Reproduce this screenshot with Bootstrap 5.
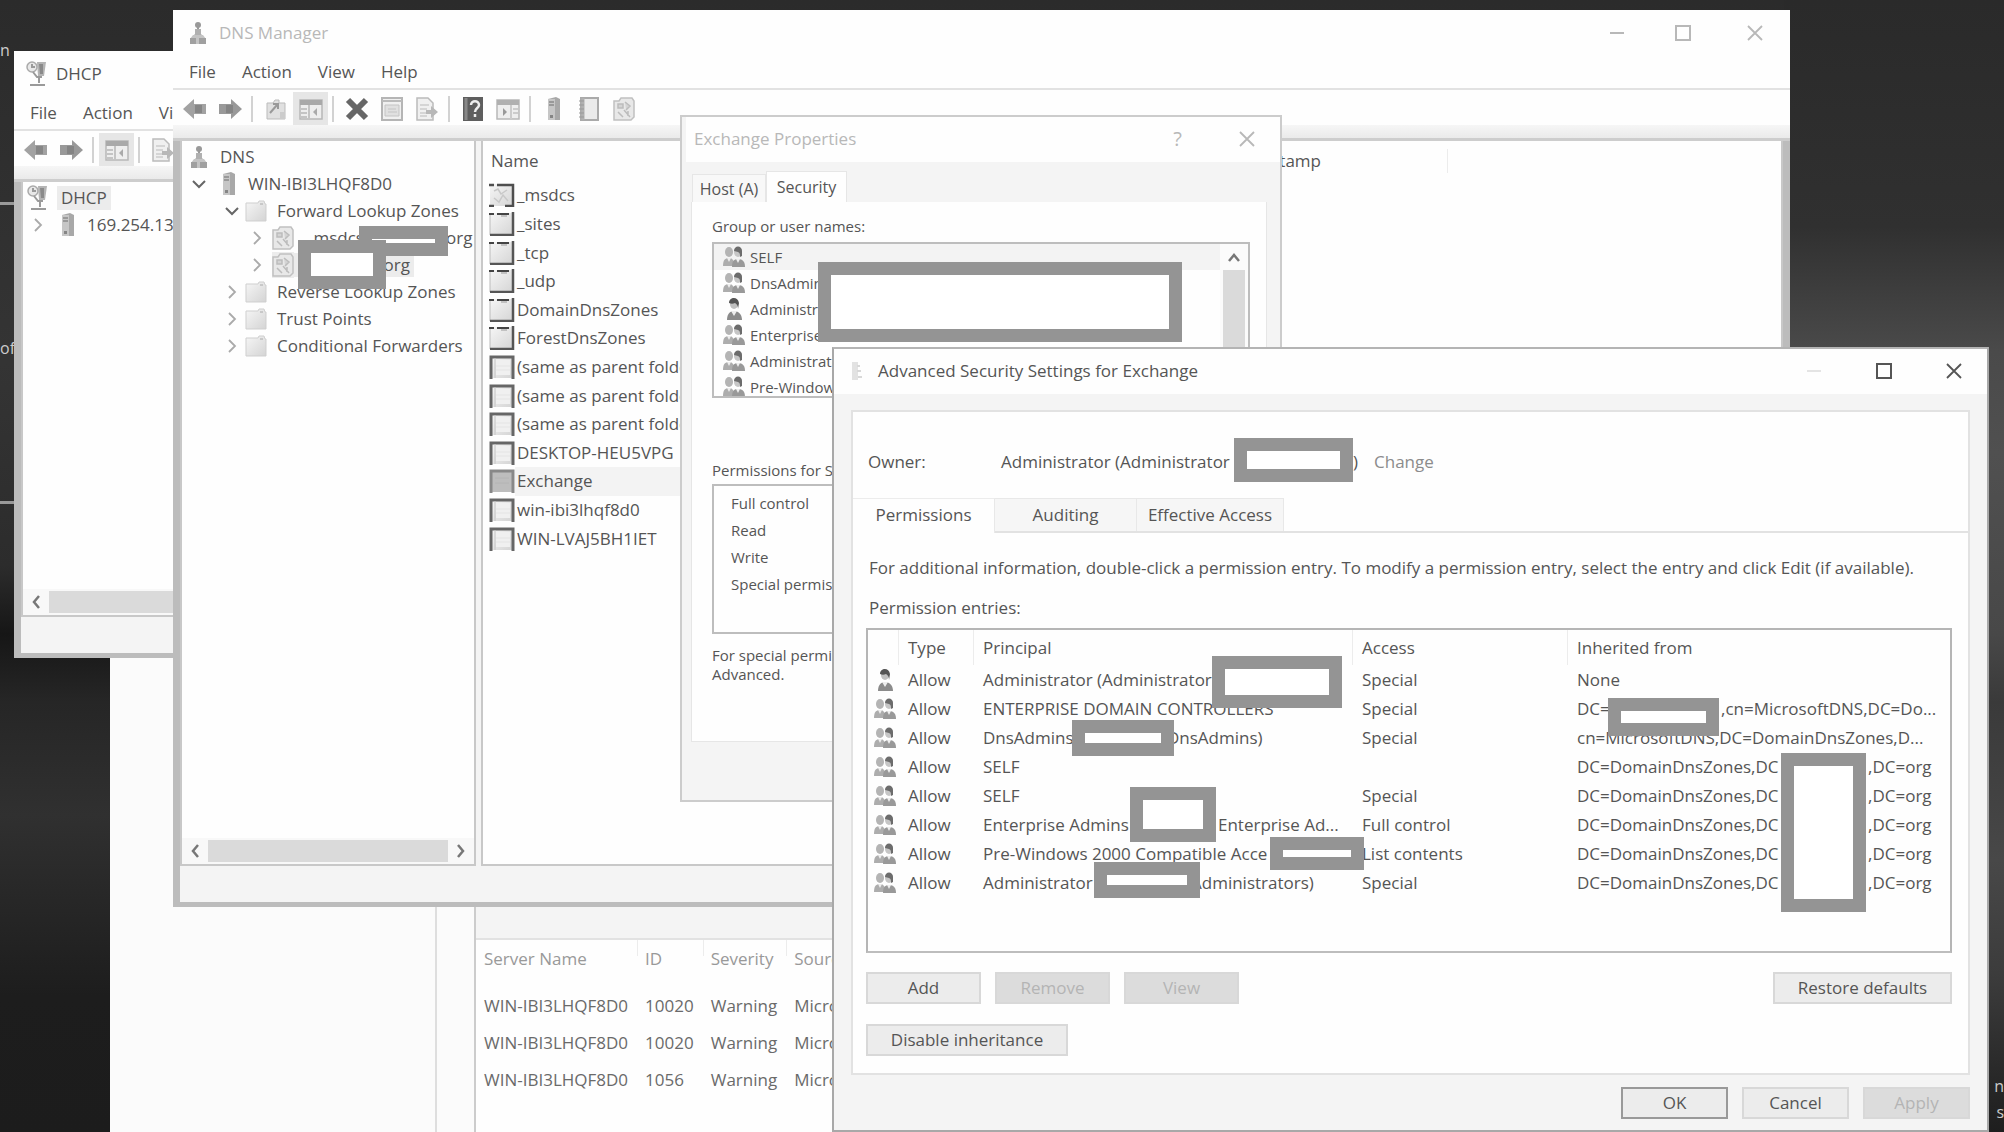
<!DOCTYPE html>
<html lang="en">
<head>
<meta charset="utf-8">
<meta name="viewport" content="width=device-width, initial-scale=1">
<title>DNS Manager</title>
<link rel="stylesheet" href="https://cdn.jsdelivr.net/npm/bootstrap@5.3.0/dist/css/bootstrap.min.css">
<style>
:root{--ink:#555;--face:#f4f4f4;--edge:#bcbcbc}
body{font-family:"Open Sans","Noto Sans",sans-serif;font-size:17px;line-height:24px;color:var(--ink);background:#2c2c2c}
.desktop{height:100vh;overflow:hidden;background:
 linear-gradient(180deg,#2a2a2a 0,#303030 20%,#4a4a4a 31%,#505050 40%,#484848 56%,#3a3a3a 62%,#484848 76%,#3c3c3c 86%,#1e1e1e 100%) right/220px 100% no-repeat,
 linear-gradient(180deg,#2b2b2b 0,#343434 32%,#2c2c2c 50%,#161616 56%,#262626 62%,#303030 72%,#1d1d1d 88%,#1c1c1c 100%)}
.desk-note{left:0;color:#ccc;font-size:16px}
.desk-line{left:0;width:14px;height:3px;background:#999}
.win{background:#fefefe;overflow:hidden;white-space:nowrap}
.win ul,.win p{margin:0;padding:0;list-style:none}
.win svg{display:block;flex:none}
.w-server{left:110px;top:640px;right:740px;bottom:0;background:#fbfbfb}
.w-dhcp{left:14px;top:51px;width:24%;height:607px}
.w-dns{left:173px;top:10px;right:214px;height:897px}
.w-props{left:680px;top:115px;right:722px;background:var(--face);border:2px solid #ccc}
.w-adv{left:832px;top:347px;right:15px;background:var(--face);border:2px solid #a8a8a8;border-top-color:#b4b4b4}
.titlebar{height:45px;background:#fefefe}
.w-props .titlebar,.w-adv .titlebar{padding-bottom:2px}
.dim{color:#b8b8b8}
.menubar{height:35px;border-bottom:2px solid #e2e2e2;gap:26px}
.menubar button,.toolbar button{border:0;background:none;color:inherit;padding:0}
.toolbar{height:35px;background:#fefefe;padding-top:2px}
.toolbar button{width:35px;height:33px;display:flex;align-items:center;justify-content:center}
.toolbar button.on{background:#e6e6e6}
.sep{width:2px;height:26px;margin:0 5px 0 4px;background:#d2d2d2}
.band{height:16px;background:linear-gradient(#f6f6f6,#eaeaea);border-bottom:3px solid #cdcdcd}
.client{border:solid var(--edge);border-width:0 7px 5px 7px;background:var(--face)}
.pane{background:#fefefe;border:2px solid #c8c8c8;border-top:0}
.statusbar{height:36px}
.win .tree{padding-top:2px}
.tree li{height:27px;display:flex;align-items:center}
.tree .tw{width:14px;display:flex;justify-content:center}
.tree .lv1{padding-left:10px}
.tree .lv2{padding-left:43px}
.tree .lv2>svg{margin:0 6px}
.tree .lv3{padding-left:68px}
.hl{background:#ececec}
.hscroll{height:26px;background:#f8f8f8}
.hscroll .thumb{height:22px;background:#dadada}
.list-head{height:40px}
.stamp{width:120px;margin-right:333px;padding-right:126px;border-right:1px solid #ececec;box-sizing:content-box}
.win .reclist{height:372px;display:grid;grid-auto-rows:1fr;padding-left:6px}
.reclist li{display:flex;align-items:center;gap:2px}
.reclist .sel{width:220px;background:linear-gradient(90deg,transparent 26px,#f3f3f3 26px)}
.props-tabs{height:40px;padding:0 10px}
.props-tabs button{border:1px solid #e6e6e6;border-bottom:0;background:#f8f8f8;color:inherit;font-size:16px;padding:0}
.props-tabs .t1{width:74px;height:28px}
.props-tabs .t2{width:81px;height:31px;background:#fefefe}
.props-body{margin:0 13px 58px 9px;background:#fefefe;border:1px solid #e6e6e6;border-top:0;padding:12px 16px 0 20px;height:540px;font-size:15px}
.boxed{border:2px solid #bdbdbd;background:#fefefe}
.users{height:156px;overflow:hidden;line-height:20px}
.users li{height:26px;display:flex;align-items:center}
.vscroll{width:28px;background:#fbfbfb}
.vscroll .thumb{width:22px;height:100px;background:#dadada}
.win .perms-label{padding-top:60px}
.win .perms{height:150px;margin-top:2px;padding:4px 17px}
.perms li{height:27px;line-height:27px}
.note-text{line-height:19px}
.adv-body{margin:16px 17px 0;background:#fefefe;border:2px solid #e2e2e2;height:665px}
.owner-row{padding:38px 0 0 15px;height:86px}
.owner-row .k{width:133px}
.owner-row .v{width:373px}
.adv-tabs{height:35px;border-bottom:2px solid #e2e2e2}
.adv-tabs button{background:#f6f6f6;border:1px solid #e8e8e8;border-width:1px 1px 0 0;color:inherit;padding:0 0 1px;height:33px;width:142px}
.adv-tabs .first{background:#fefefe;height:35px;border-top-color:#ececec;padding:0 0 3px}
.adv-tabs .last{width:147px}
.adv-main{padding:23px 16px 0 13px}
.win .adv-main p{padding-left:3px}
.entries-box{height:325px;border:2px solid #b5b5b5;border-bottom-color:#bdbdbd}
.entries{width:100%;table-layout:fixed;border-collapse:collapse}
.entries th{font-weight:400;height:35px;padding:0 0 0 10px}
.entries th+th{background:linear-gradient(#ececec,#ececec) left top/1px 35px no-repeat}
.entries td{height:29px;padding:0 0 0 10px;line-height:24px;overflow:hidden}
.entries td:first-child{padding-left:5px}
.piece{display:inline-block;vertical-align:top}
.btn-win{--bs-btn-padding-x:0;--bs-btn-padding-y:0;--bs-btn-font-size:17px;--bs-btn-line-height:28px;--bs-btn-border-radius:0;--bs-btn-color:#555;--bs-btn-bg:#ececec;--bs-btn-border-color:#d8d8d8;--bs-btn-border-width:2px;--bs-btn-disabled-color:#b4b4b4;--bs-btn-disabled-bg:#dcdcdc;--bs-btn-disabled-border-color:#d8d8d8;--bs-btn-disabled-opacity:1;width:115px}
.btn-win.wide{width:179px}.btn-win.wider{width:202px}.btn-win.dlg{width:107px}
.btn-win.default{--bs-btn-border-color:#999}
.footer-row{height:55px;padding:12px 17px 0;gap:14px}
.cover{background:#fff;border:13px solid #949494}
.srv-tbl{border-collapse:collapse}
.srv-tbl th{font-weight:400;color:#999;height:37px;padding:0 9px 0 8px;background:linear-gradient(#ececec,#ececec) left top/1px 16px no-repeat}
.srv-tbl th:first-child{background:none}
.srv-tbl td{height:37px;padding:0 9px 0 8px}
.srv-tbl .gap-row td{height:10px}
.srv-left{width:327px;border-right:2px solid #dedede}
.srv-gap{width:37px}
.srv-right{border-left:2px solid #ccc;background:#fefefe;color:#6a6a6a}
.srv-head{height:300px;background:var(--face);border-bottom:2px solid #e2e2e2}
</style>
</head>
<body>
<svg width="0" height="0" class="position-absolute" aria-hidden="true">
 <defs>
  <linearGradient id="gr" x1="0" y1="0" x2="1" y2="1"><stop offset="0" stop-color="#f6f6f6"/><stop offset="1" stop-color="#d4d4d4"/></linearGradient>
  <symbol id="i-dns" viewBox="0 0 18 24"><circle cx="9" cy="4" r="3" fill="#999"/><path d="M9 6v6M4 17l5-6 5 6M6 9h6" stroke="#999" stroke-width="2" fill="none"/><path d="M6 8h6v6H6z" fill="#b0b0b0"/><path d="M4 14h10l3 4v5H1v-5z" fill="#c4c4c4"/><path d="M1 17h6v6H1zM10 17h7v6h-7z" fill="#a0a0a0"/></symbol>
  <symbol id="i-dhcp" viewBox="0 0 22 26"><path d="M11 1h9l-2 14h-6z" fill="#b4b4b4"/><path d="M13 3h4v10h-3z" fill="#8a8a8a"/><circle cx="6" cy="6" r="5" fill="#e8e8e8" stroke="#aaa" stroke-width="1.5"/><path d="M6 3v3h3M7 11l4 5h5M13 16v6M4 24h15" stroke="#9a9a9a" stroke-width="2" fill="none"/></symbol>
  <symbol id="i-back" viewBox="0 0 24 24"><path d="M0 12 11 2v5h12v10H11v5z" fill="#a2a2a2"/><path d="M12 8h7v8h-7z" fill="#868686"/></symbol>
  <symbol id="i-fwd" viewBox="0 0 24 24"><path d="M24 12 13 2v5H1v10h12v5z" fill="#999"/><path d="M8 8h7v8H8z" fill="#848484"/></symbol>
  <symbol id="i-up" viewBox="0 0 22 24"><path d="M2 6h6l2-3h4v3h6v16H2z" fill="#e0e0e0" stroke="#bbb"/><path d="m5 16 7-8M8 7h5v5" stroke="#999" stroke-width="2" fill="none"/><path d="M15 15h5v7h-5z" fill="#ccc"/></symbol>
  <symbol id="i-pane" viewBox="0 0 24 24"><path d="M1 3h22v19H1z" fill="#eee" stroke="#b8b8b8" stroke-width="1.5"/><path d="M1 3h22v5H1z" fill="#a9a9a9"/><path d="M10 8v14M2 12h6M2 16h6M2 20h6" stroke="#c4c4c4" stroke-width="2"/><path d="m18 11-4 4 4 4z" fill="#aaa"/></symbol>
  <symbol id="i-x" viewBox="0 0 24 24"><path d="m3 3 18 18M21 3 3 21" stroke="#666" stroke-width="6"/></symbol>
  <symbol id="i-prop" viewBox="0 0 22 24"><path d="M1 1h20v22H1z" fill="#f0f0f0" stroke="#b5b5b5" stroke-width="2"/><path d="M1 4h20" stroke="#bbb" stroke-width="2"/><path d="M4 8h14v11H4zM7 12h8M7 15h9" fill="#e0e0e0" stroke="#c4c4c4"/></symbol>
  <symbol id="i-export" viewBox="0 0 24 24"><path d="M2 1h11l5 5v17H2z" fill="#f0f0f0" stroke="#bbb" stroke-width="1.5"/><path d="M5 8h9M5 12h7M5 16h6M5 19h7" stroke="#ccc" stroke-width="1.5"/><path d="M23 15l-7-6v4h-5v4h5v4z" fill="#b8b8b8"/></symbol>
  <symbol id="i-help" viewBox="0 0 20 24"><path d="M0 0h20v24H0z" fill="#5e5e5e"/><path d="M3 1v22" stroke="#888" stroke-width="3"/><path d="M8 8c0-5 8-5 8 0 0 3-4 3-4 7M12 17v3" stroke="#eee" stroke-width="2.5" fill="none"/></symbol>
  <symbol id="i-panel" viewBox="0 0 24 24"><path d="M1 3h22v19H1z" fill="#eee" stroke="#b8b8b8" stroke-width="1.5"/><path d="M1 3h22v5H1z" fill="#b0b0b0"/><path d="M15 8v14M17 12h5M17 16h5" stroke="#ccc" stroke-width="2"/><path d="m7 11 4 4-4 4z" fill="#999"/></symbol>
  <symbol id="i-server" viewBox="0 0 14 24"><path d="M1 2 9 0l4 2v21H1z" fill="#a8a8a8"/><path d="M1 2h7v21H1z" fill="#c6c6c6"/><path d="M2 5h5M2 8h5" stroke="#8a8a8a" stroke-width="1.5"/><path d="M3 18h3v3H3z" fill="#858585"/></symbol>
  <symbol id="i-book" viewBox="0 0 22 24"><path d="M3 1h17v22H3z" fill="#eaeaea" stroke="#aaa" stroke-width="2"/><path d="M5 1v22" stroke="#b0b0b0" stroke-width="3"/><path d="M1 4h5M1 8h5M1 12h5M1 16h5M1 20h5" stroke="#999"/></symbol>
  <symbol id="i-zone" viewBox="0 0 22 24"><path d="M1 4h5l2-3h11l2 3v16l-3 3H1z" fill="#e8e8e8" stroke="#c0c0c0" stroke-width="1.5"/><path d="M5 7h5v4H5zM12 5l5 4-4 4M5 15l5 5M11 13l6 7M15 14v5" fill="#d4d4d4" stroke="#bcbcbc" stroke-width="1.5"/></symbol>
  <symbol id="i-folder" viewBox="0 0 22 22"><path d="M1 3h12l1-2h5l1 3h1v17H1z" fill="url(#gr)" stroke="#cfcfcf"/><path d="M15 4h3" stroke="#aaa"/></symbol>
  <symbol id="i-group" viewBox="0 0 24 24"><ellipse cx="7" cy="7" rx="4" ry="5" fill="#b4b4b4"/><path d="M1 21c0-6 2-8 6-8s5 3 6 8z" fill="#adadad"/><path d="m5 13 2 4 2-4z" fill="#eee"/><ellipse cx="16" cy="7" rx="4" ry="5" fill="#c6c6c6"/><path d="M12 6c0-6 8-6 8 0v5l-2 1c0-3 0-4-2-5z" fill="#6c6c6c"/><path d="M10 22c0-6 2-8 6-8 5 0 7 3 7 8z" fill="#999"/><path d="m14 14 2 4 2-4z" fill="#eee"/></symbol>
  <symbol id="i-user" viewBox="0 0 24 24"><ellipse cx="12" cy="7" rx="4" ry="5" fill="#c0c0c0"/><path d="M7 6c0-6 9-7 10 0l-1 6c0-3-1-5-3-6-2 1-4 1-6 0z" fill="#555"/><path d="M5 23c0-6 3-9 7-9s8 3 8 9z" fill="#8b8b8b"/><path d="m9 14 3 5 3-5z" fill="#eee"/></symbol>
  <symbol id="i-fold" viewBox="0 0 26 24"><path d="M1 1h24v22H1z" fill="url(#gr)"/><path d="M1 1v22" stroke="#bbb"/><path d="M0 2h5M8 2h12" stroke="#444" stroke-width="2"/><path d="M12 4h6" stroke="#999"/><path d="M24 0v23H1" stroke="#555" stroke-width="2.5" fill="none"/></symbol>
  <symbol id="i-zonebox" viewBox="0 0 26 24"><path d="M1 1h24v22H1z" fill="url(#gr)"/><path d="M0 2h5M8 2h16v21h-8M5 23H0" stroke="#4e4e4e" stroke-width="2.5" fill="none"/><path d="m5 8 4-2 3 5 6-4M5 15l5 4 4-7 5 6" stroke="#c8c8c8" stroke-width="1.5" fill="none"/></symbol>
  <symbol id="i-rec" viewBox="0 0 26 24"><path d="M2 1h22v22H2z" fill="url(#gr)"/><path d="M7 5h14v15H7z" fill="#f0f0f0"/><path d="M7 11h14M7 15h14" stroke="#e4e4e4"/><path d="M2 24V2h22v22" stroke="#666" stroke-width="3" fill="none"/><path d="M6 3v20" stroke="#c4c4c4"/></symbol>
  <symbol id="i-recsel" viewBox="0 0 26 24"><path d="M2 1h22v22H2z" fill="#bdbdbd"/><path d="M2 24V2h22v22" stroke="#888" stroke-width="3" fill="none"/><path d="M6 9h14M6 14h14" stroke="#b4b4b4"/></symbol>
  <symbol id="c-r" viewBox="0 0 10 14"><path d="m2 1 6 6-6 6" stroke="#aaa" stroke-width="1.8" fill="none"/></symbol>
  <symbol id="c-d" viewBox="0 0 14 10"><path d="m1 2 6 6 6-6" stroke="#666" stroke-width="2" fill="none"/></symbol>
  <symbol id="s-l" viewBox="0 0 10 14"><path d="M8 1 3 7l5 6" stroke="#777" stroke-width="2.5" fill="none"/></symbol>
  <symbol id="s-r" viewBox="0 0 10 14"><path d="m2 1 5 6-5 6" stroke="#777" stroke-width="2.5" fill="none"/></symbol>
  <symbol id="s-u" viewBox="0 0 14 10"><path d="m2 9 5-6 5 6" stroke="#777" stroke-width="2.5" fill="none"/></symbol>
  <symbol id="w-close" viewBox="0 0 18 18"><path d="m2 2 14 14M16 2 2 16" stroke="currentColor" stroke-width="1.8"/></symbol>
  <symbol id="w-max" viewBox="0 0 18 18"><path d="M2 2h14v14H2z" stroke="currentColor" stroke-width="2" fill="none"/></symbol>
  <symbol id="w-min" viewBox="0 0 18 18"><path d="M2 9h14" stroke="currentColor" stroke-width="2"/></symbol>
 </defs>
</svg>

<main class="desktop position-relative">
 <span class="desk-note position-absolute" style="top:38px">n</span>
 <span class="desk-line position-absolute" style="top:202px"></span>
 <span class="desk-note position-absolute" style="top:336px">of</span>
 <span class="desk-line position-absolute" style="top:501px"></span>
 <span class="desk-note position-absolute end-0 text-end" style="top:1074px">n</span>
 <span class="desk-note position-absolute end-0 text-end" style="top:1100px">s</span>

 <!-- server manager behind everything -->
 <section class="win w-server position-absolute d-flex">
  <div class="srv-left"></div><div class="srv-gap"></div>
  <div class="srv-right flex-grow-1">
   <div class="srv-head"></div>
   <table class="srv-tbl">
    <thead><tr><th>Server Name</th><th>ID</th><th>Severity</th><th>Source</th></tr></thead>
    <tbody>
     <tr class="gap-row"><td colspan="4"></td></tr>
     <tr><td>WIN-IBI3LHQF8D0</td><td>10020</td><td>Warning</td><td>Microsoft</td></tr>
     <tr><td>WIN-IBI3LHQF8D0</td><td>10020</td><td>Warning</td><td>Microsoft</td></tr>
     <tr><td>WIN-IBI3LHQF8D0</td><td>1056</td><td>Warning</td><td>Microsoft</td></tr>
    </tbody>
   </table>
  </div>
 </section>

 <!-- DHCP console -->
 <section class="win w-dhcp position-absolute d-flex flex-column">
  <header class="titlebar d-flex align-items-center ps-2 ms-1"><svg class="me-2" width="22" height="26"><use href="#i-dhcp"/></svg><span>DHCP</span></header>
  <nav class="menubar d-flex align-items-center ps-3"><button type="button">File</button><button type="button">Action</button><button type="button">View</button></nav>
  <div class="toolbar d-flex align-items-center ps-1">
   <button type="button" aria-label="Back"><svg width="24" height="24"><use href="#i-back"/></svg></button>
   <button type="button" aria-label="Forward"><svg width="24" height="24"><use href="#i-fwd"/></svg></button><span class="sep"></span>
   <button type="button" class="on" aria-label="Console tree"><svg width="24" height="24"><use href="#i-pane"/></svg></button><span class="sep"></span>
   <button type="button" aria-label="Export"><svg width="24" height="24"><use href="#i-export"/></svg></button>
  </div>
  <div class="band"></div>
  <div class="client d-flex flex-column flex-grow-1">
   <div class="pane flex-grow-1 d-flex flex-column">
    <ul class="tree flex-grow-1">
     <li class="ps-1"><svg width="22" height="26"><use href="#i-dhcp"/></svg><span class="hl px-1 ms-2">DHCP</span></li>
     <li class="ps-2"><span class="tw"><svg width="10" height="14"><use href="#c-r"/></svg></span><svg class="ms-3 me-2" width="14" height="24"><use href="#i-server"/></svg><span class="ps-1">169.254.13.</span></li>
    </ul>
    <div class="hscroll d-flex align-items-center ps-2"><svg class="me-2" width="10" height="14"><use href="#s-l"/></svg><span class="thumb flex-grow-1"></span></div>
   </div>
   <div class="statusbar"></div>
  </div>
 </section>

 <!-- DNS console -->
 <section class="win w-dns position-absolute d-flex flex-column">
  <header class="titlebar d-flex align-items-center dim"><svg class="mx-3 me-2" width="18" height="26"><use href="#i-dns"/></svg><span class="flex-grow-1 ps-1">DNS Manager</span>
   <svg class="me-5" width="18" height="18"><use href="#w-min"/></svg><svg class="me-5" width="18" height="18"><use href="#w-max"/></svg><svg class="me-4 ms-1" width="22" height="18"><use href="#w-close"/></svg></header>
  <nav class="menubar d-flex align-items-center ps-3"><button type="button">File</button><button type="button">Action</button><button type="button">View</button><button type="button">Help</button></nav>
  <div class="toolbar d-flex align-items-center ps-1">
   <button type="button" aria-label="Back"><svg width="24" height="24"><use href="#i-back"/></svg></button>
   <button type="button" aria-label="Forward"><svg width="24" height="24"><use href="#i-fwd"/></svg></button><span class="sep"></span>
   <button type="button" aria-label="Up"><svg width="22" height="24"><use href="#i-up"/></svg></button>
   <button type="button" class="on" aria-label="Console tree"><svg width="24" height="24"><use href="#i-pane"/></svg></button><span class="sep"></span>
   <button type="button" aria-label="Delete"><svg width="24" height="24"><use href="#i-x"/></svg></button>
   <button type="button" aria-label="Properties"><svg width="22" height="24"><use href="#i-prop"/></svg></button>
   <button type="button" aria-label="Export"><svg width="24" height="24"><use href="#i-export"/></svg></button><span class="sep"></span>
   <button type="button" aria-label="Help"><svg width="20" height="24"><use href="#i-help"/></svg></button>
   <button type="button" aria-label="Action pane"><svg width="24" height="24"><use href="#i-panel"/></svg></button><span class="sep"></span>
   <button type="button" aria-label="Server"><svg width="14" height="24"><use href="#i-server"/></svg></button>
   <button type="button" aria-label="Records"><svg width="22" height="24"><use href="#i-book"/></svg></button>
   <button type="button" aria-label="Zone"><svg width="22" height="24"><use href="#i-zone"/></svg></button>
  </div>
  <div class="band"></div>
  <div class="client d-flex flex-column flex-grow-1">
   <div class="d-flex flex-grow-1" style="gap:5px">
    <div class="pane d-flex flex-column" style="flex:0 0 296px">
     <ul class="tree flex-grow-1">
      <li class="ps-2"><svg class="me-2" width="18" height="24"><use href="#i-dns"/></svg><span class="ps-1">DNS</span></li>
      <li class="lv1"><span class="tw"><svg width="14" height="10"><use href="#c-d"/></svg></span><svg class="ms-3 me-2" width="14" height="24"><use href="#i-server"/></svg><span class="ps-1">WIN-IBI3LHQF8D0</span></li>
      <li class="lv2"><span class="tw"><svg width="14" height="10"><use href="#c-d"/></svg></span><svg width="22" height="22"><use href="#i-folder"/></svg><span class="ps-1">Forward Lookup Zones</span></li>
      <li class="lv3"><span class="tw"><svg width="10" height="14"><use href="#c-r"/></svg></span><svg class="mx-2" width="22" height="24"><use href="#i-zone"/></svg><span class="ps-1" style="width:144px">_msdcs.</span>org</li>
      <li class="lv3"><span class="tw"><svg width="10" height="14"><use href="#c-r"/></svg></span><svg class="ms-2 hl" width="22" height="26"><use href="#i-zone"/></svg><span class="hl text-end pe-1" style="width:120px">org</span></li>
      <li class="lv2"><span class="tw"><svg width="10" height="14"><use href="#c-r"/></svg></span><svg width="22" height="22"><use href="#i-folder"/></svg><span class="ps-1">Reverse Lookup Zones</span></li>
      <li class="lv2"><span class="tw"><svg width="10" height="14"><use href="#c-r"/></svg></span><svg width="22" height="22"><use href="#i-folder"/></svg><span class="ps-1">Trust Points</span></li>
      <li class="lv2"><span class="tw"><svg width="10" height="14"><use href="#c-r"/></svg></span><svg width="22" height="22"><use href="#i-folder"/></svg><span class="ps-1">Conditional Forwarders</span></li>
     </ul>
     <div class="hscroll d-flex align-items-center px-2"><svg class="me-2" width="10" height="14"><use href="#s-l"/></svg><span class="thumb flex-grow-1"></span><svg class="ms-2" width="10" height="14"><use href="#s-r"/></svg></div>
    </div>
    <div class="pane flex-grow-1">
     <div class="list-head d-flex align-items-center"><span class="ps-2">Name</span><span class="stamp ms-auto text-end">Timestamp</span></div>
     <ul class="reclist">
      <li><svg width="26" height="24"><use href="#i-zonebox"/></svg>_msdcs</li>
      <li><svg width="26" height="24"><use href="#i-fold"/></svg>_sites</li>
      <li><svg width="26" height="24"><use href="#i-fold"/></svg>_tcp</li>
      <li><svg width="26" height="24"><use href="#i-fold"/></svg>_udp</li>
      <li><svg width="26" height="24"><use href="#i-fold"/></svg>DomainDnsZones</li>
      <li><svg width="26" height="24"><use href="#i-fold"/></svg>ForestDnsZones</li>
      <li><svg width="26" height="24"><use href="#i-rec"/></svg>(same as parent folder)</li>
      <li><svg width="26" height="24"><use href="#i-rec"/></svg>(same as parent folder)</li>
      <li><svg width="26" height="24"><use href="#i-rec"/></svg>(same as parent folder)</li>
      <li><svg width="26" height="24"><use href="#i-rec"/></svg>DESKTOP-HEU5VPG</li>
      <li class="sel"><svg width="26" height="24"><use href="#i-recsel"/></svg>Exchange</li>
      <li><svg width="26" height="24"><use href="#i-rec"/></svg>win-ibi3lhqf8d0</li>
      <li><svg width="26" height="24"><use href="#i-rec"/></svg>WIN-LVAJ5BH1IET</li>
     </ul>
    </div>
   </div>
   <div class="statusbar"></div>
  </div>
 </section>

 <!-- Exchange Properties -->
 <section class="win w-props position-absolute">
  <header class="titlebar d-flex align-items-center dim ps-2 ms-1"><span class="flex-grow-1">Exchange Properties</span><span class="fs-5 me-5">?</span><svg class="me-4 ms-2" width="18" height="18"><use href="#w-close"/></svg></header>
  <div class="props-tabs d-flex align-items-end"><button type="button" class="t1">Host (A)</button><button type="button" class="t2">Security</button></div>
  <div class="props-body">
   <p>Group or user names:</p>
   <div class="boxed users d-flex mt-1">
    <ul class="flex-grow-1">
     <li class="ps-1" style="background:#f3f3f3"><svg class="mx-1" width="24" height="24"><use href="#i-group"/></svg>SELF</li>
     <li class="ps-1"><svg class="mx-1" width="24" height="24"><use href="#i-group"/></svg>DnsAdmins</li>
     <li class="ps-1"><svg class="mx-1" width="24" height="24"><use href="#i-user"/></svg>Administrator</li>
     <li class="ps-1"><svg class="mx-1" width="24" height="24"><use href="#i-group"/></svg>Enterprise</li>
     <li class="ps-1"><svg class="mx-1" width="24" height="24"><use href="#i-group"/></svg>Administrators</li>
     <li class="ps-1"><svg class="mx-1" width="24" height="24"><use href="#i-group"/></svg>Pre-Windows 2000</li>
    </ul>
    <div class="vscroll d-flex flex-column align-items-center"><svg class="my-2" width="14" height="10"><use href="#s-u"/></svg><span class="thumb"></span></div>
   </div>
   <p class="perms-label">Permissions for SELF</p>
   <ul class="boxed perms"><li>Full control</li><li>Read</li><li>Write</li><li>Special permissions</li></ul>
   <p class="note-text pt-2 mt-1">For special permissions<br>Advanced.</p>
  </div>
 </section>

 <!-- Advanced Security Settings -->
 <section class="win w-adv position-absolute">
  <header class="titlebar d-flex align-items-center"><svg class="ms-3 me-3" width="12" height="20"><path d="M2 1h6v18H2z" fill="#e2e2e2"/><path d="M7 5h3M7 10h4M8 16h4" stroke="#d8d8d8" stroke-width="2"/></svg><span class="flex-grow-1">Advanced Security Settings for Exchange</span>
   <svg class="me-5" width="18" height="18" style="color:#e4e4e4"><use href="#w-min"/></svg><svg class="me-5 ms-1" width="18" height="18"><use href="#w-max"/></svg><svg class="me-4 ms-1" width="18" height="18"><use href="#w-close"/></svg></header>
  <div class="adv-body">
   <div class="owner-row d-flex"><span class="k">Owner:</span><span class="v d-flex justify-content-between"><span>Administrator (Administrator</span><span class="pe-3">)</span></span><a href="#" class="text-decoration-none" style="color:#8c8c8c">Change</a></div>
   <div class="adv-tabs d-flex"><button type="button" class="first">Permissions</button><button type="button">Auditing</button><button type="button" class="last">Effective Access</button></div>
   <div class="adv-main">
    <p>For additional information, double-click a permission entry. To modify a permission entry, select the entry and click Edit (if available).</p>
    <p class="pt-3 pb-2">Permission entries:</p>
    <div class="entries-box">
     <table class="entries">
      <colgroup><col style="width:30px"><col style="width:75px"><col style="width:379px"><col style="width:215px"><col></colgroup>
      <thead><tr><th></th><th>Type</th><th>Principal</th><th>Access</th><th>Inherited from</th></tr></thead>
      <tbody>
       <tr><td><svg width="24" height="24"><use href="#i-user"/></svg></td><td>Allow</td><td>Administrator (Administrator</td><td>Special</td><td>None</td></tr>
       <tr><td><svg width="24" height="24"><use href="#i-group"/></svg></td><td>Allow</td><td>ENTERPRISE DOMAIN CONTROLLERS</td><td>Special</td><td><span class="piece" style="width:144px">DC=</span>,cn=MicrosoftDNS,DC=Do...</td></tr>
       <tr><td><svg width="24" height="24"><use href="#i-group"/></svg></td><td>Allow</td><td><span class="piece" style="width:184px">DnsAdmins</span>DnsAdmins)</td><td>Special</td><td>cn=MicrosoftDNS,DC=DomainDnsZones,D...</td></tr>
       <tr><td><svg width="24" height="24"><use href="#i-group"/></svg></td><td>Allow</td><td>SELF</td><td></td><td><span class="piece" style="width:291px">DC=DomainDnsZones,DC</span>,DC=org</td></tr>
       <tr><td><svg width="24" height="24"><use href="#i-group"/></svg></td><td>Allow</td><td>SELF</td><td>Special</td><td><span class="piece" style="width:291px">DC=DomainDnsZones,DC</span>,DC=org</td></tr>
       <tr><td><svg width="24" height="24"><use href="#i-group"/></svg></td><td>Allow</td><td><span class="piece" style="width:235px">Enterprise Admins</span>Enterprise Ad...</td><td>Full control</td><td><span class="piece" style="width:291px">DC=DomainDnsZones,DC</span>,DC=org</td></tr>
       <tr><td><svg width="24" height="24"><use href="#i-group"/></svg></td><td>Allow</td><td>Pre-Windows 2000 Compatible Acce</td><td>List contents</td><td><span class="piece" style="width:291px">DC=DomainDnsZones,DC</span>,DC=org</td></tr>
       <tr><td><svg width="24" height="24"><use href="#i-group"/></svg></td><td>Allow</td><td><span class="piece" style="width:208px">Administrator</span>Administrators)</td><td>Special</td><td><span class="piece" style="width:291px">DC=DomainDnsZones,DC</span>,DC=org</td></tr>
      </tbody>
     </table>
    </div>
    <div class="d-flex mt-3" style="gap:14px;padding-top:3px"><button type="button" class="btn btn-win">Add</button><button type="button" class="btn btn-win" disabled>Remove</button><button type="button" class="btn btn-win" disabled>View</button><button type="button" class="btn btn-win wide ms-auto">Restore defaults</button></div>
    <button type="button" class="btn btn-win wider" style="margin-top:20px">Disable inheritance</button>
   </div>
  </div>
  <footer class="footer-row d-flex justify-content-end align-items-start"><button type="button" class="btn btn-win dlg default">OK</button><button type="button" class="btn btn-win dlg">Cancel</button><button type="button" class="btn btn-win dlg" disabled>Apply</button></footer>
 </section>

 <!-- blanked-out names laid over the windows -->
 <span class="cover position-absolute" style="left:359px;top:226px;width:89px;height:30px"></span>
 <span class="cover position-absolute" style="left:298px;top:240px;width:88px;height:49px"></span>
 <span class="cover position-absolute" style="left:818px;top:262px;width:364px;height:80px"></span>
 <span class="cover position-absolute" style="left:1234px;top:438px;width:119px;height:44px"></span>
 <span class="cover position-absolute" style="left:1212px;top:656px;width:130px;height:52px"></span>
 <span class="cover position-absolute" style="left:1072px;top:720px;width:102px;height:36px"></span>
 <span class="cover position-absolute" style="left:1130px;top:787px;width:86px;height:55px"></span>
 <span class="cover position-absolute" style="left:1270px;top:837px;width:94px;height:33px"></span>
 <span class="cover position-absolute" style="left:1094px;top:862px;width:106px;height:36px"></span>
 <span class="cover position-absolute" style="left:1608px;top:698px;width:111px;height:38px"></span>
 <span class="cover position-absolute" style="left:1781px;top:753px;width:85px;height:159px"></span>
</main>
<script src="https://cdn.jsdelivr.net/npm/bootstrap@5.3.0/dist/js/bootstrap.bundle.min.js"></script>
</body>
</html>
